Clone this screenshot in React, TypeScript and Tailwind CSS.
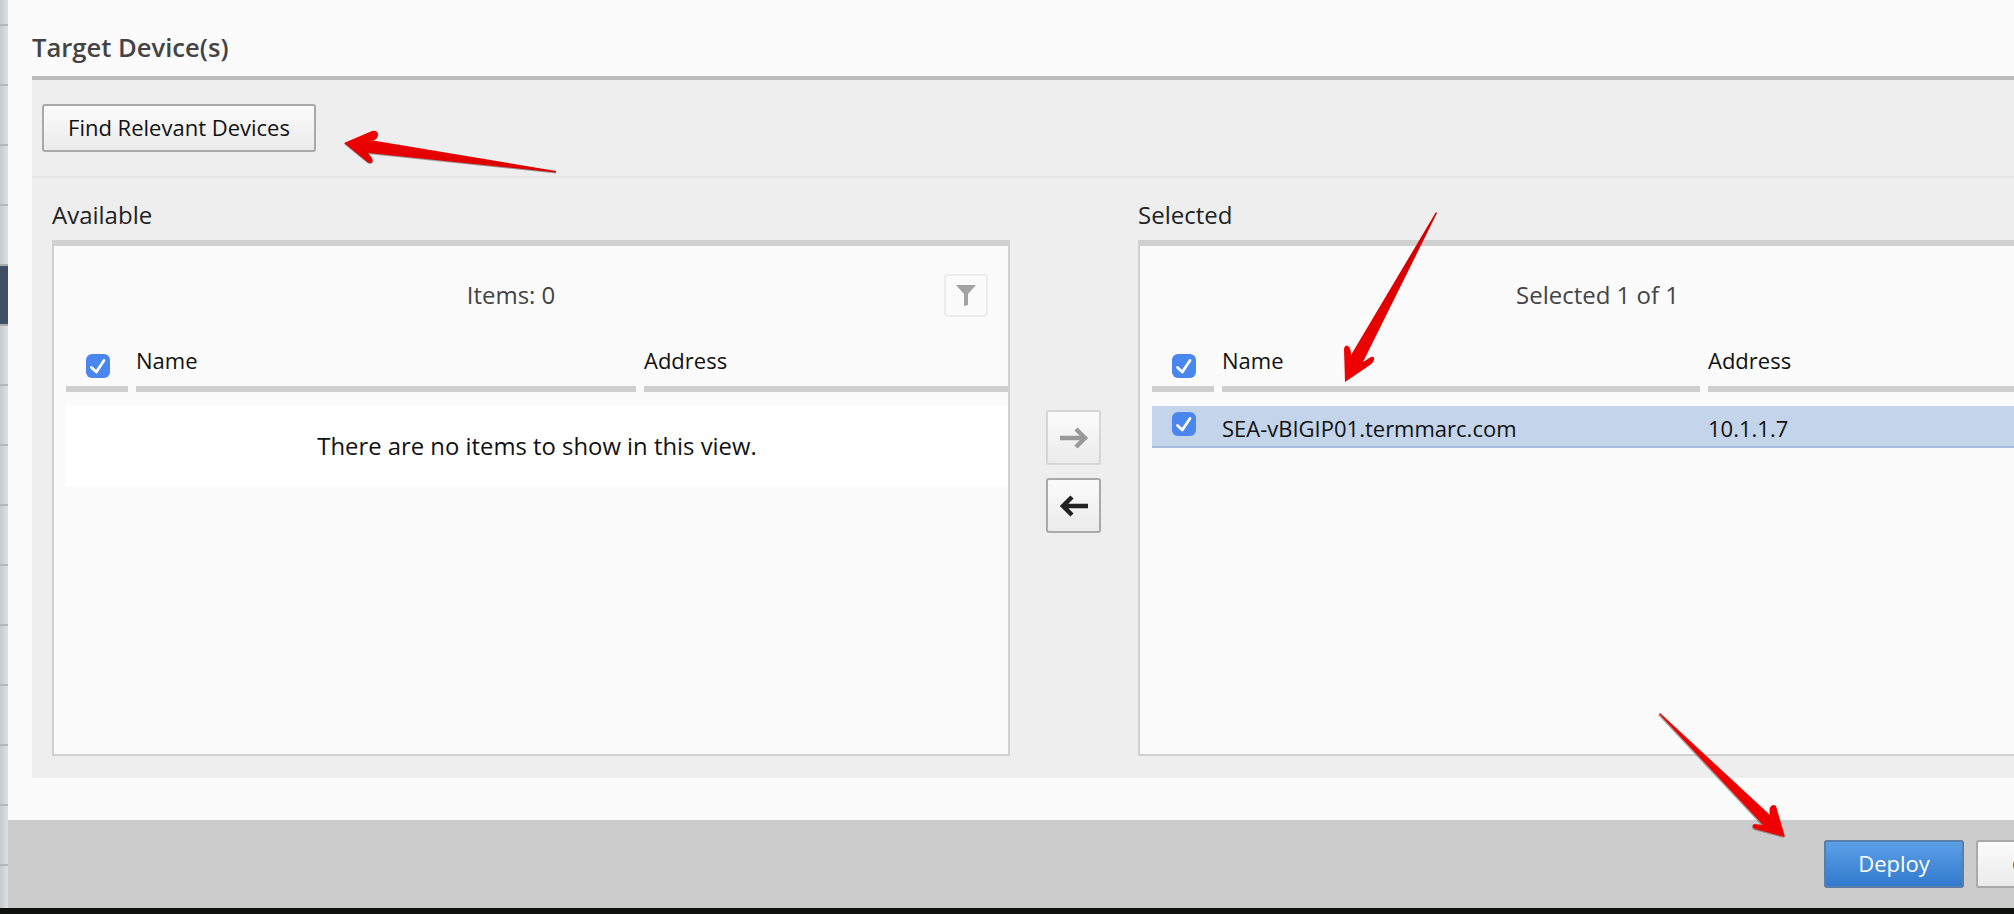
const OS = "font-['Open_Sans','Noto_Sans',sans-serif]";

function Check({ className = "" }: { className?: string }) {
  return (
    <div className={`h-6 w-6 rounded-[6px] bg-[#4a86f0] ${className}`}>
      <svg width="24" height="24" viewBox="0 0 24 24" fill="none" stroke="#fff" strokeWidth="2.8" strokeLinecap="round" strokeLinejoin="round">
        <path d="M5.5 13.5 L10.3 18 L18 6.5" />
      </svg>
    </div>
  );
}

function ArrowBtn({ dir, enabled }: { dir: "l" | "r"; enabled: boolean }) {
  return (
    <div className={`flex h-[55px] w-[55px] items-center justify-center rounded-[3px] border-2 bg-gradient-to-b from-[#fbfbfb] to-[#ebebeb] ${enabled ? "border-[#a9a9a9]" : "border-[#d6d6d6]"}`}>
      <svg width="30" height="24" viewBox="0 0 30 24" fill="none" stroke={enabled ? "#222" : "#999"} strokeWidth="4.5" style={{ filter: "blur(0.5px)" }}>
        {dir === "r" ? <path d="M1 12 H26 M17 3 L26 12 L17 21" /> : <path d="M29 12 H4 M13 3 L4 12 L13 21" />}
      </svg>
    </div>
  );
}

function TableHead({ widths }: { widths: [number, number, number] }) {
  return (
    <div className="flex h-[38px] shrink-0 gap-2">
      <div className="flex flex-col justify-between" style={{ width: widths[0] }}>
        <Check className="ml-5" />
        <div className="h-1.5 bg-[#cfcfcf]" />
      </div>
      <div className="flex flex-col justify-between" style={{ width: widths[1] }}>
        <span className="-mt-2 text-[22px] leading-[28px] text-[#111]">Name</span>
        <div className="h-1.5 bg-[#cfcfcf]" />
      </div>
      <div className="flex flex-col justify-between" style={{ width: widths[2] }}>
        <span className="-mt-2 text-[22px] leading-[28px] text-[#111]">Address</span>
        <div className="h-1.5 bg-[#cfcfcf]" />
      </div>
    </div>
  );
}

export default function App() {
  return (
    <div className={`relative flex h-[914px] w-[2014px] overflow-hidden bg-[#101210] ${OS}`}>
      <div className="flex h-[908px] w-2 shrink-0 flex-col bg-gradient-to-r from-[#c8c9cb] to-[#dfe0e2]">
        <div className="h-[264px] shrink-0 bg-[repeating-linear-gradient(to_bottom,transparent_0,transparent_24px,#b4b8bc_24px,#b4b8bc_26px,transparent_26px,transparent_60px)]" />
        <div className="h-[62px] shrink-0 border-y-2 border-[#a9aeb3] bg-[#3e5065]" />
        <div className="flex-1 bg-[repeating-linear-gradient(to_bottom,transparent_0,transparent_58px,#b4b8bc_58px,#b4b8bc_60px)]" />
      </div>
      <div className="flex h-[908px] min-w-0 flex-1 flex-col">
        <div className="flex h-[820px] flex-col bg-[#fbfbfb] pl-6">
          <div className="flex h-[76px] shrink-0 items-end pb-[11px]">
            <h2 className="text-[25.6px] font-semibold leading-[34px] text-[#444]">Target Device(s)</h2>
          </div>
          <div className="mb-[42px] flex flex-1 flex-col border-t-4 border-[#bbbbbb] bg-[#eeeeee]">
            <div className="flex h-[98px] shrink-0 items-start border-b-2 border-[#e7e7e7] pl-2.5 pt-6">
              <button className="flex h-12 w-[274px] items-center justify-center rounded-[3px] border-2 border-[#a9a9a9] bg-gradient-to-b from-[#fbfbfb] to-[#ebebeb] pb-[1px] text-[22px] text-[#111]">
                Find Relevant Devices
              </button>
            </div>
            <div className="flex flex-1 pb-[22px] pl-5">
              {/* Available */}
              <div className="flex w-[958px] shrink-0 flex-col">
                <div className="flex h-[62px] shrink-0 items-center pt-3 text-[24px] text-[#222]">Available</div>
                <div className="flex flex-1 flex-col border-x-2 border-b-2 border-t-[6px] border-[#d0d0d0] bg-[#fbfbfb] pl-3">
                  <div className="relative flex h-[108px] shrink-0 items-start justify-center pt-[34px] text-[24px] leading-[30px] text-[#444]">
                    <span className="mr-[52px]">Items: 0</span>
                    <div className="absolute right-[20px] top-7 flex h-[43px] w-[44px] items-center justify-center rounded-[4px] border-2 border-[#ececec]">
                      <svg width="20" height="21" viewBox="0 0 20 21" fill="#a3a3a3"><path d="M0 0 H20 L12 9 V20 L8 21 V9 Z" /></svg>
                    </div>
                  </div>
                  <TableHead widths={[62, 500, 364]} />
                  <div className="mt-3.5 flex h-20 shrink-0 items-center justify-center bg-white pt-[2px] text-[23.85px] text-[#111]">
                    There are no items to show in this view.
                  </div>
                </div>
              </div>
              {/* Shuttle buttons */}
              <div className="flex w-[128px] shrink-0 flex-col items-center gap-[13px] pr-[1px] pt-[232px]">
                <ArrowBtn dir="r" enabled={false} />
                <ArrowBtn dir="l" enabled />
              </div>
              {/* Selected */}
              <div className="flex w-[900px] shrink-0 flex-col">
                <div className="flex h-[62px] shrink-0 items-center pt-3 text-[24px] text-[#222]">Selected</div>
                <div className="flex flex-1 flex-col border-l-2 border-b-2 border-t-[6px] border-[#d0d0d0] bg-[#fbfbfb] pl-3">
                  <div className="flex h-[108px] shrink-0 items-start pl-[364px] pt-[34px] text-[24px] leading-[30px] text-[#444]">
                    Selected 1 of 1
                  </div>
                  <TableHead widths={[62, 478, 320]} />
                  <div className="mt-3.5 flex h-[42px] shrink-0 gap-2 border-b-2 border-[#a6bde2] bg-[#c4d4ea] text-[22px] text-[#111]">
                    <div className="w-[62px] pt-1.5"><Check className="ml-5" /></div>
                    <div className="w-[478px] leading-[44px]">SEA-vBIGIP01.termmarc.com</div>
                    <div className="leading-[44px]">10.1.1.7</div>
                  </div>
                </div>
              </div>
            </div>
          </div>
        </div>
        <div className="flex h-[88px] justify-end gap-3 bg-[#cccccc] pt-5">
          <button className="h-12 w-[140px] shrink-0 rounded-[3px] border-2 border-[#5a7ea8] bg-gradient-to-b from-[#5b9fe6] to-[#327ace] pb-[1px] text-[22px] text-white">
            Deploy
          </button>
          <button className="h-12 w-[38px] shrink-0 overflow-hidden rounded-l-[3px] border-y-2 border-l-2 border-[#a9a9a9] bg-gradient-to-b from-[#fbfbfb] to-[#ebebeb] pl-[34px] text-left text-[22px] text-[#111]">
            Cancel
          </button>
        </div>
      </div>
      <svg className="pointer-events-none absolute left-0 top-0" width="2014" height="914" viewBox="0 0 2014 914">
        <defs>
          <linearGradient id="r1" x1="0" y1="0" x2="0" y2="1"><stop offset="0" stopColor="#f40000" /><stop offset="1" stopColor="#d80000" /></linearGradient>
          <linearGradient id="r2" x1="0" y1="0" x2="1" y2="0"><stop offset="0" stopColor="#f20000" /><stop offset="1" stopColor="#d00000" /></linearGradient>
        </defs>
        <path d="M344 143 L372 131 Q377 130 378 134 Q378 138 374 140 L370 140 L556 171 L556 172.5 L368 153 L372 158 Q374 163 370 163 Q368 163 366 161 Z" fill="#666" transform="translate(0 1)" opacity="0.6" />
        <path d="M344 143 L372 131 Q377 130 378 134 Q378 138 374 140 L370 140 L556 171 L556 172.5 L368 153 L372 158 Q374 163 370 163 Q368 163 366 161 Z" fill="url(#r1)" />
        <path d="M1436 212 L1437 213 L1363 362 L1371 357 Q1375 356 1374 360 Q1373 363 1370 365 L1345 382 L1344 349 Q1345 344 1348 346 Q1351 348 1351 355 Z" fill="url(#r2)" />
        <path d="M1659 714 L1660 713 L1770 815 L1770 808 Q1772 803 1776 806 L1785 837 L1755 829 Q1751 826 1754 824 L1763 825 Z" fill="#555" transform="translate(-1 1)" opacity="0.5" />
        <path d="M1659 714 L1660 713 L1770 815 L1770 808 Q1772 803 1776 806 L1785 837 L1755 829 Q1751 826 1754 824 L1763 825 Z" fill="#ee0000" />
      </svg>
    </div>
  );
}
